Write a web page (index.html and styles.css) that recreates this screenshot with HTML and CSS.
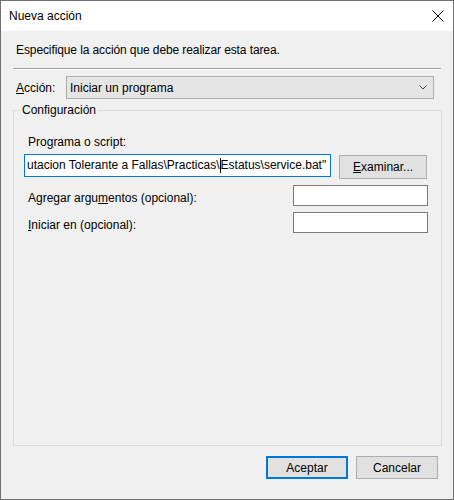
FILE: index.html
```html
<!DOCTYPE html>
<html lang="es">
<head>
<meta charset="utf-8">
<title>Nueva acción</title>
<link rel="stylesheet" href="styles.css">
</head>
<body>
<div class="window">
  <div class="titlebar">
    <span class="title">Nueva acción</span>
    <svg class="close" width="12" height="12" viewBox="0 0 12 12"><path d="M0.5 0.5 L11.5 11.5 M11.5 0.5 L0.5 11.5" stroke="#000" stroke-width="1" fill="none"/></svg>
  </div>
  <div class="content">
    <p class="intro">Especifique la acción que debe realizar esta tarea.</p>
    <div class="sep"></div>
    <div class="action-row">
      <label class="action-label"><u>A</u>cción:</label>
      <div class="select">
        <span>Iniciar un programa</span>
        <svg class="chev" width="8" height="5" viewBox="0 0 8 5"><path d="M0.5 0.5 L4 4 L7.5 0.5" stroke="#444" stroke-width="1" fill="none"/></svg>
      </div>
    </div>
    <fieldset class="group">
      <legend>Configuración</legend>
      <div class="field-label">Pro<u>g</u>rama o script:</div>
      <div class="prog-row">
        <div class="textbox focused"><span>utacion Tolerante a Fallas\Practicas\</span><span class="caret"></span><span>Estatus\service.bat"</span></div>
        <div class="btn browse"><u>E</u>xaminar...</div>
      </div>
      <div class="opt-row first">
        <span>Agregar argu<u>m</u>entos (opcional):</span>
        <div class="textbox small"></div>
      </div>
      <div class="opt-row">
        <span><u>I</u>niciar en (opcional):</span>
        <div class="textbox small"></div>
      </div>
    </fieldset>
    <div class="footer">
      <div class="btn default">Aceptar</div>
      <div class="btn">Cancelar</div>
    </div>
  </div>
</div>
</body>
</html>
```

FILE: styles.css
```css
* { box-sizing: border-box; }
html, body { margin: 0; padding: 0; }
body {
  font-family: "Liberation Sans", Arial, sans-serif;
  font-size: 12px;
  color: #000;
  background: #f0f0f0;
}
.window {
  width: 454px;
  height: 500px;
  border: 1px solid #707070;
  display: flex;
  flex-direction: column;
  background: #f0f0f0;
}
.titlebar {
  height: 30px;
  background: #fff;
  display: flex;
  align-items: center;
  justify-content: space-between;
  padding: 0 9px 0 8px;
  flex: none;
}
.title { line-height: 15px; padding-top: 1px; }
.close { display: block; }
.content {
  flex: 1;
  display: flex;
  flex-direction: column;
  padding: 0 11px 0 12px;
}
.intro {
  margin: 12px 0 0 3px;
  line-height: 15px;
  letter-spacing: -0.1px;
}
.sep {
  margin-top: 10px;
  height: 2px;
  border-top: 1px solid #a0a0a0;
  border-bottom: 1px solid #fff;
  margin-right: 1px;
}
.action-row {
  display: flex;
  align-items: center;
  margin-top: 6px;
}
.action-label { width: 53px; padding-left: 3px; }
.select {
  flex: 1;
  height: 23px;
  background: #e5e5e5;
  border: 1px solid #adadad;
  display: flex;
  align-items: center;
  justify-content: space-between;
  padding: 0 6px 0 3px;
  margin-right: 8px;
}
.chev { display: block; }
.group {
  margin: 4px 0 0 0;
  border: 1px solid #dcdcdc;
  padding: 15px 14px 0 10px;
  height: 343px;
  min-width: 0;
}
.group legend {
  padding: 0 2px;
  margin-left: -4px;
  line-height: 15px;
}
.field-label { padding-left: 4px; line-height: 15px; margin-top: 2px; }
.prog-row {
  display: flex;
  align-items: flex-start;
  margin-top: 4px;
}
.textbox {
  background: #fff;
  border: 1px solid #7a7a7a;
  height: 21px;
}
.textbox.focused {
  width: 308px;
  height: 23px;
  border-color: #0078d7;
  padding: 3px 2px 0 2px;
  white-space: nowrap;
  overflow: hidden;
  line-height: 15px;
}
.caret {
  display: inline-block;
  width: 1px;
  height: 15px;
  background: #000;
  vertical-align: top;
}
.btn {
  display: flex;
  align-items: center;
  justify-content: center;
  background: #e1e1e1;
  border: 1px solid #adadad;
  width: 82px;
  height: 23px;
}
.browse {
  margin-left: 8px;
  width: 88px;
  height: 24px;
  margin-top: 1px;
}
.opt-row {
  display: flex;
  align-items: center;
  justify-content: space-between;
  padding-left: 4px;
  margin-top: 6px;
}
.opt-row span { padding-top: 4px; }
.textbox.small { width: 135px; margin-right: -1px; }
.footer {
  display: flex;
  justify-content: flex-end;
  gap: 8px;
  margin-top: 10px;
  padding-right: 4px;
}
.btn.default {
  border: 2px solid #0078d7;
}
```
